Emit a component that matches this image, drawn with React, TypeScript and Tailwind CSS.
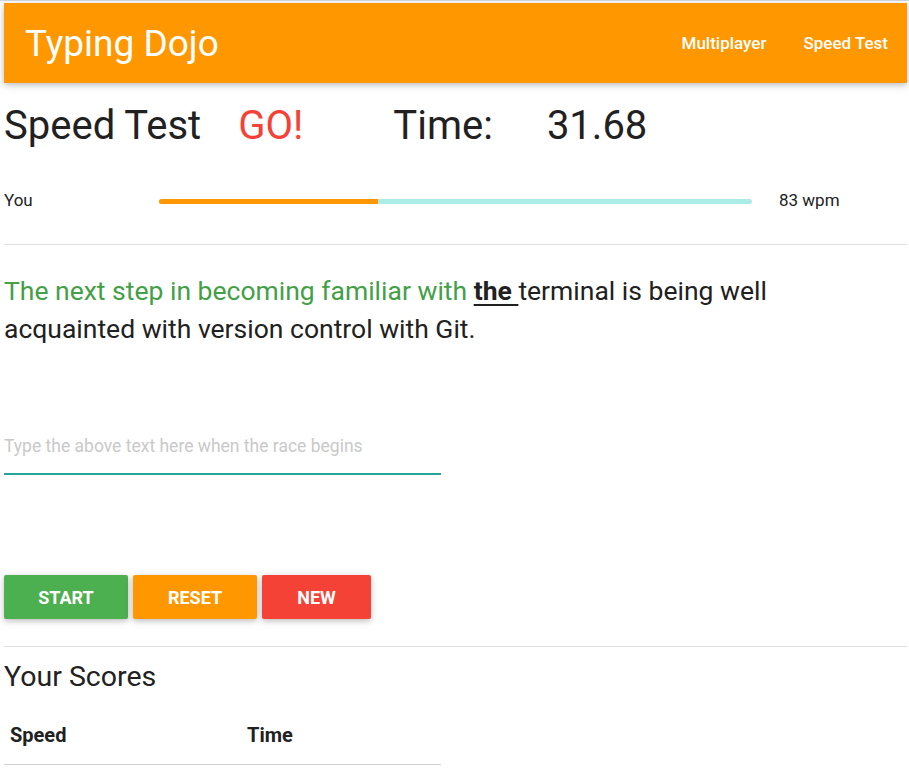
const Header = () => {
  return (
    <nav className="flex h-[80px] items-center justify-between bg-[#ff9800] shadow-[0_2px_5px_rgba(0,0,0,0.16),0_2px_10px_rgba(0,0,0,0.12)]">
      <a href="#" className="pl-[21px] text-[37px] leading-none text-white">
        Typing Dojo
      </a>
      <div className="flex gap-[37px] pr-[19px] pt-[2px] text-[17px] font-medium text-white">
        <a href="#">Multiplayer</a>
        <a href="#">Speed Test</a>
      </div>
    </nav>
  );
};

const Progress = ({ label, pct, wpm }: { label: string; pct: number; wpm: number }) => {
  return (
    <div className="mt-[39px] flex h-[24px] items-center text-[17px]">
      <span className="w-[155px]">{label}</span>
      <div className="h-[5px] w-[593px] overflow-hidden rounded-full bg-[#acece6]">
        <div className="h-full bg-[#ff9800]" style={{ width: `${pct}%` }} />
      </div>
      <span className="ml-[27px]">{wpm} wpm</span>
    </div>
  );
};

export default function App() {
  return (
    <div className="min-h-screen bg-white font-['Roboto',sans-serif] text-[#212121]">
      <div className="h-px bg-[#d3d7dd]" />
      <div className="pl-[4px] pr-[2px] pt-[2px]">
        <Header />

        <div className="mt-[19px] flex text-[40px] leading-[48px]">
          <span>Speed Test</span>
          <span className="ml-[37px] text-[#f44336]">GO!</span>
          <span className="ml-[90px]">Time:</span>
          <span className="ml-[54px]">31.68</span>
        </div>

        <Progress label="You" pct={37} wpm={83} />

        <hr className="mt-[31px] border-t border-[#e0e0e0]" />

        <p className="mt-[27px] max-w-[800px] text-[26.5px] leading-[38px]">
          <span className="text-[#43a047]">The next step in becoming familiar with </span>
          <span className="font-bold underline decoration-2 underline-offset-[4px]">the </span>
          terminal is being well acquainted with version control with Git.
        </p>

        <input
          autoFocus
          type="text"
          placeholder="Type the above text here when the race begins"
          className="mt-[80px] block h-[47px] w-[437px] border-b-2 border-[#26a69a] pb-[10px] text-[17.5px] outline-none placeholder:text-[#c9c9c9]"
        />

        <div className="mt-[100px] flex gap-[5px]">
          <button className="h-[44px] w-[124px] rounded-[2px] bg-[#4caf50] text-[18px] font-bold text-white shadow-[0_2px_5px_rgba(0,0,0,0.16),0_2px_10px_rgba(0,0,0,0.12)]">
            START
          </button>
          <button className="h-[44px] w-[124px] rounded-[2px] bg-[#ff9800] text-[18px] font-bold text-white shadow-[0_2px_5px_rgba(0,0,0,0.16),0_2px_10px_rgba(0,0,0,0.12)]">
            RESET
          </button>
          <button className="h-[44px] w-[109px] rounded-[2px] bg-[#f44336] text-[18px] font-bold text-white shadow-[0_2px_5px_rgba(0,0,0,0.16),0_2px_10px_rgba(0,0,0,0.12)]">
            NEW
          </button>
        </div>

        <hr className="mt-[27px] border-t border-[#e0e0e0]" />

        <h4 className="mt-[13px] text-[28.5px] leading-[34px]">Your Scores</h4>

        <table className="mt-[14px] w-[437px] text-left">
          <thead>
            <tr className="border-b border-[#d0d0d0]">
              <th className="w-[237px] px-[6px] pb-[17px] pt-[15px] text-[20px] font-bold leading-[24px]">Speed</th>
              <th className="px-[6px] pb-[17px] pt-[15px] text-[20px] font-bold leading-[24px]">Time</th>
            </tr>
          </thead>
          <tbody></tbody>
        </table>
      </div>
    </div>
  );
}
